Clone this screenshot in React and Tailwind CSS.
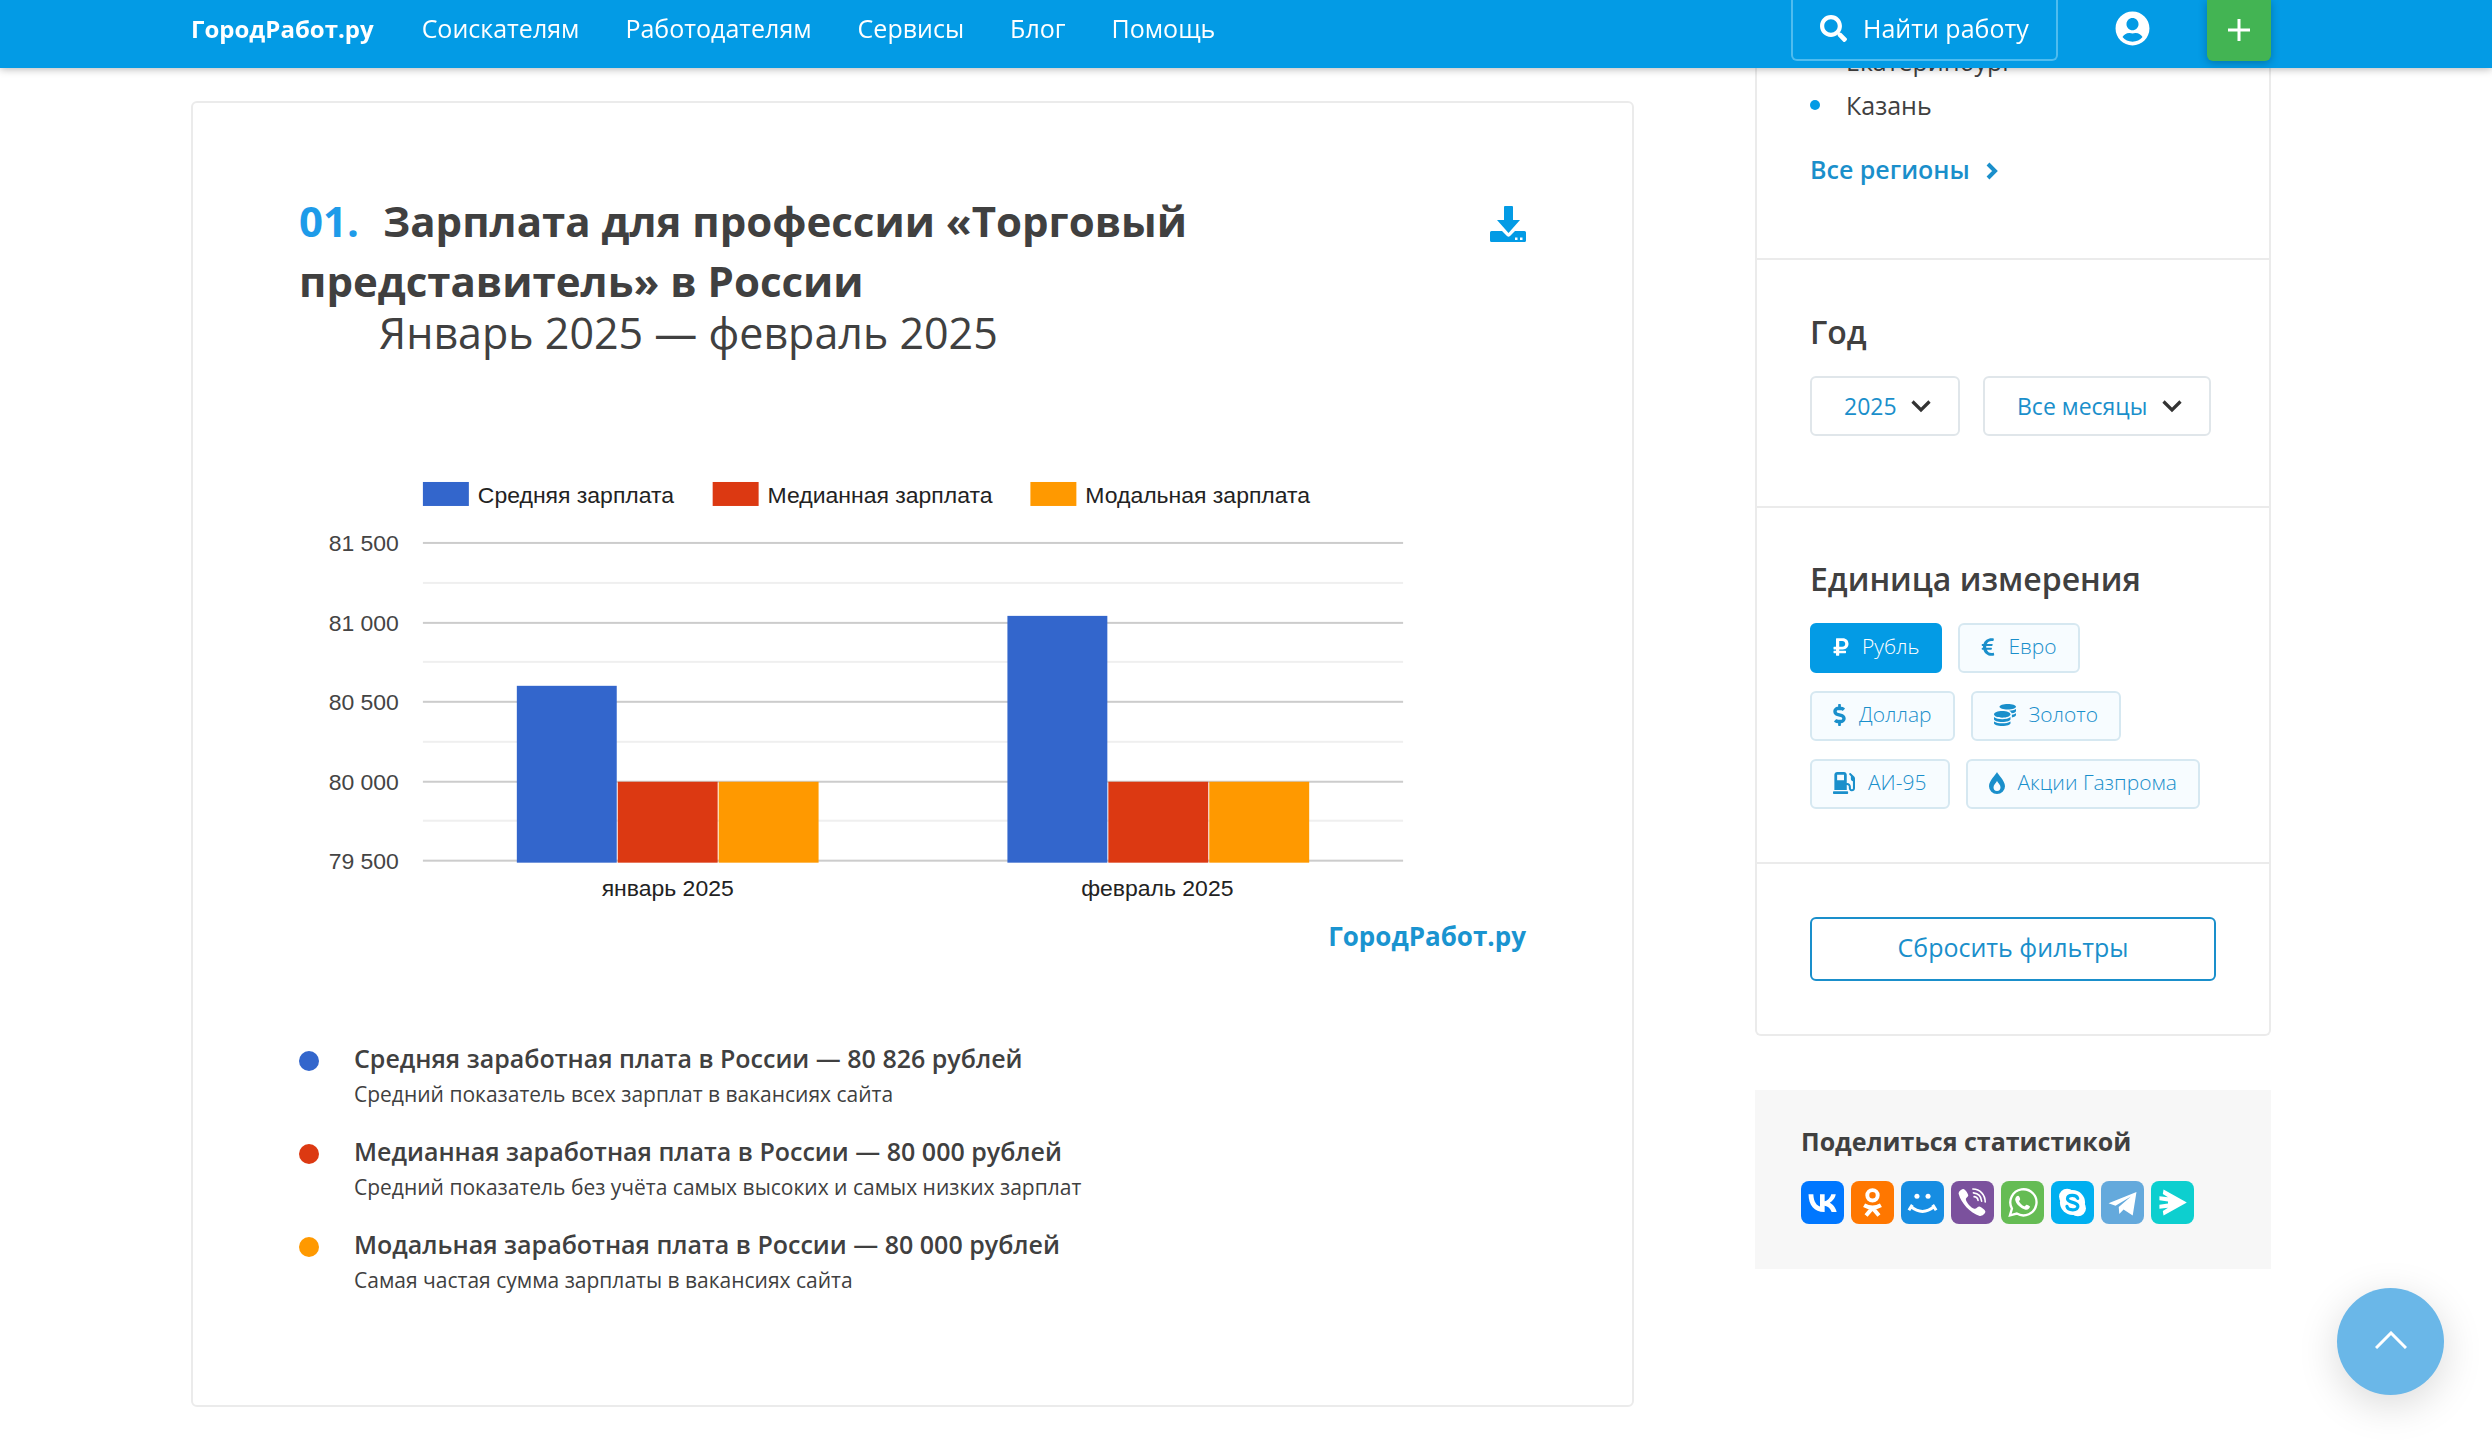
import { useState } from "react";
import { FaSearch, FaUserCircle, FaRubleSign, FaEuroSign, FaDollarSign, FaCoins, FaGasPump } from "react-icons/fa";

const NAV_LINKS = ["Соискателям", "Работодателям", "Сервисы", "Блог", "Помощь"];

const SERIES = [
    { name: "Средняя зарплата", color: "#3366cc", legendX: 124 },
    { name: "Медианная зарплата", color: "#dc3912", legendX: 414 },
    { name: "Модальная зарплата", color: "#ff9900", legendX: 732 },
];

const MONTHS = [
    { label: "январь 2025", values: [80602, 80000, 80000] },
    { label: "февраль 2025", values: [81040, 80000, 80000] },
];

const TICKS = [
    { value: 81500, label: "81 500" },
    { value: 81000, label: "81 000" },
    { value: 80500, label: "80 500" },
    { value: 80000, label: "80 000" },
    { value: 79500, label: "79 500" },
];

const SUMMARY = [
    {
        dot: "bg-[#3366cc]",
        title: "Средняя заработная плата в России — 80 826 рублей",
        note: "Средний показатель всех зарплат в вакансиях сайта",
    },
    {
        dot: "bg-[#dc3912]",
        title: "Медианная заработная плата в России — 80 000 рублей",
        note: "Средний показатель без учёта самых высоких и самых низких зарплат",
    },
    {
        dot: "bg-[#ff9900]",
        title: "Модальная заработная плата в России — 80 000 рублей",
        note: "Самая частая сумма зарплаты в вакансиях сайта",
    },
];

const DropIcon = ({ className }) => (
    <svg viewBox="0 0 16 22" className={className} fill="currentColor" aria-hidden="true">
        <path
            fillRule="evenodd"
            d="M8 0C8.6 2.2 16 8.600 16 14.200A8 7.800 0 0 1 0 14.200C0 8.600 7.400 2.200 8 0ZM8 9C7 11 4.500 12.700 4.500 15.300A3.500 3.700 0 0 0 11.500 15.300C11.500 12.700 9 11 8 9Z"
        />
    </svg>
);

const UNITS = [
    { id: "rub", label: "Рубль", icon: FaRubleSign, size: "w-4 h-5" },
    { id: "eur", label: "Евро", icon: FaEuroSign, size: "w-[14px] h-5" },
    { id: "usd", label: "Доллар", icon: FaDollarSign, size: "w-[13px] h-[22px]" },
    { id: "gold", label: "Золото", icon: FaCoins, size: "w-[22px] h-[22px]" },
    { id: "fuel", label: "АИ-95", icon: FaGasPump, size: "w-[22px] h-[22px]" },
    { id: "gazprom", label: "Акции Газпрома", icon: DropIcon, size: "w-4 h-[22px]" },
];

const SHARE = [
    {
        name: "ВКонтакте",
        bg: "bg-[#0077ff]",
        icon: <path fill="#fff" d="M12.900 17.300C7.400 17.300 4.300 13.600 4.200 7.400H6.900C7 11.900 9 13.800 10.600 14.200V7.400H13.200V11.300C14.700 11.100 16.400 9.300 16.900 7.400H19.400C19 9.700 17.300 11.400 16.100 12.100C17.300 12.700 19.200 14.200 19.900 17.300H17.100C16.500 15.400 15.100 14 13.200 13.800V17.300Z" />,
    },
    {
        name: "Одноклассники",
        bg: "bg-[#ff7700]",
        icon: (
            <g fill="none" stroke="#fff" strokeWidth="2.200">
                <circle cx="12" cy="8" r="2.900" />
                <path d="M7.300 13.500Q12 16.200 16.700 13.500M12 15L8.400 19.300M12 15L15.600 19.300" />
            </g>
        ),
    },
    {
        name: "Мой Мир",
        bg: "bg-[#168de2]",
        icon: (
            <g fill="none" stroke="#fff" strokeWidth="1.700">
                <circle cx="8.900" cy="8.500" r="1.400" fill="#fff" stroke="none" />
                <circle cx="15.100" cy="8.500" r="1.400" fill="#fff" stroke="none" />
                <path d="M5.400 14.200Q12 19.800 18.600 14.200M4.400 16.300L6.300 13.300M19.600 16.300L17.700 13.300" />
            </g>
        ),
    },
    {
        name: "Viber",
        bg: "bg-[#7b519d]",
        icon: (
            <g>
                <path fill="#fff" d="M6.700 4.500C7.700 4.200 9.300 6.700 9.600 7.800C9.800 8.900 8.200 9.300 8.300 10.300C8.500 12 11.200 15 13 15.500C14.300 15.800 14.600 14 15.800 14.200C16.900 14.400 19.300 16.200 19.200 17.200C19 18.400 17.200 19.800 16 19.500C10.600 17.800 5.600 12.300 4.300 7.300C4 6.100 5.500 4.800 6.700 4.500Z" />
                <path fill="none" stroke="#fff" strokeWidth="0.900" strokeLinecap="round" d="M12.200 4.500C16.300 4.600 19 7.600 19.100 11.700M12.500 6.600C15.300 6.900 16.900 8.600 17.100 11.300M12.900 8.700C14.300 8.900 15 9.600 15.100 10.900" />
            </g>
        ),
    },
    {
        name: "WhatsApp",
        bg: "bg-[#65bc54]",
        icon: (
            <g>
                <path fill="none" stroke="#fff" strokeWidth="1.300" d="M5 19.200L6.100 15.400A7.300 7.300 0 1 1 8.800 18.200Z" />
                <path fill="#fff" d="M9.600 8.200C10.200 8.200 10.700 9.800 10.700 10.200C10.700 10.700 9.900 11 10.100 11.500C10.800 12.800 11.700 13.600 13 14.100C13.500 14.200 13.900 13.100 14.300 13.200C14.800 13.300 16.200 14 16.200 14.300C16 15.600 14.900 16.200 13.700 16C10.900 15.400 8.300 12.800 7.900 10.500C7.800 9.400 8.700 8.200 9.600 8.200Z" />
            </g>
        ),
    },
    {
        name: "Skype",
        bg: "bg-[#00aff0]",
        icon: (
            <g>
                <circle cx="9" cy="8.800" r="4.500" fill="#fff" />
                <circle cx="15" cy="15.200" r="4.500" fill="#fff" />
                <circle cx="12" cy="12" r="7" fill="#fff" />
                <path fill="none" stroke="#00aff0" strokeWidth="1.800" strokeLinecap="round" d="M14.900 9.700C14.200 7.500 9.300 7.400 9.200 9.900C9.200 12.400 15 11.400 15 14.100C14.900 16.800 9.500 16.700 8.900 14.200" />
            </g>
        ),
    },
    {
        name: "Telegram",
        bg: "bg-[#64a9dc]",
        icon: <path fill="#fff" d="M4.200 12.400L19.800 6.200L17.700 19.200L12.600 15.900L10.200 18.400L9.900 14.500L16.700 8.700L8.100 13.800Z" />,
    },
    {
        name: "Поделиться",
        bg: "bg-[#0dcfcf]",
        icon: <path fill="#fff" d="M20 12L7 19.200L6.600 16.800L9.500 14.900L4.700 15.500V13.300L9.500 12.600V11.400L4.700 10.700V8.500L9.500 9.100L6.600 7.200L7 4.800Z" />,
    },
];

const Header = () => (
    <header className="fixed inset-x-0 top-0 z-20 h-[68px] bg-[#039be5] pr-[30px] shadow-[0_1px_8px_rgba(0,0,0,0.3)]">
        <div className="mx-auto flex h-[61px] max-w-[2080px] items-stretch text-[25px] leading-[57px] text-white">
            <a href="#home" className="mr-12 text-[24px] font-bold">ГородРабот.ру</a>
            <nav className="flex gap-[46px]">
                {NAV_LINKS.map((link) => (
                    <a key={link} href="#nav">{link}</a>
                ))}
            </nav>
            <a
                href="#search"
                className="ml-auto mr-[57px] flex w-[267px] items-center gap-4 rounded-b-md border-x-2 border-b-2 border-[#4fbcef] pb-0.5 pl-[27px]"
            >
                <FaSearch className="size-[27px]" />
                <span>Найти работу</span>
            </a>
            <button aria-label="Профиль" className="mr-[57px]">
                <FaUserCircle className="mb-1 size-[35px]" />
            </button>
            <button
                aria-label="Добавить"
                className="flex w-16 items-center justify-center rounded-b-md bg-[#43b453] pb-0.5 shadow-[0_2px_8px_rgba(0,0,0,0.25)]"
            >
                <svg viewBox="0 0 22 22" className="size-[22px]" stroke="currentColor" strokeWidth="3">
                    <path d="M11 0V22M0 11H22" />
                </svg>
            </button>
        </div>
    </header>
);

const SalaryChart = () => {
    const y = (value) => 81 + ((81500 - value) / 2000) * 318;

    return (
        <svg viewBox="0 0 1228 440" className="w-full" fontFamily="'Liberation Sans', Arial, sans-serif" fontSize="23">
            {SERIES.map((s) => (
                <g key={s.name}>
                    <rect x={s.legendX} y="20" width="46" height="24" fill={s.color} />
                    <text x={s.legendX + 55} y="41" fill="#222">{s.name}</text>
                </g>
            ))}

            {TICKS.map((tick, i) => (
                <g key={tick.value}>
                    <rect x="124" y={Math.round(y(tick.value)) - 1} width="981" height="2" fill="#ccc" />
                    {i < TICKS.length - 1 && (
                        <rect x="124" y={Math.round(y(tick.value - 250)) - 1} width="981" height="2" fill="#efefef" />
                    )}
                    <text x="100" y={Math.round(y(tick.value)) + 8} textAnchor="end" fill="#444">{tick.label}</text>
                </g>
            ))}

            {MONTHS.map((month, m) => (
                <g key={month.label}>
                    {month.values.map((value, i) => (
                        <rect
                            key={SERIES[i].name}
                            x={218 + m * 491 + i * 101}
                            y={Math.round(y(value))}
                            width="100"
                            height={401 - Math.round(y(value))}
                            fill={SERIES[i].color}
                        />
                    ))}
                    <text x={369 + m * 490} y="434" textAnchor="middle" fill="#222">{month.label}</text>
                </g>
            ))}
        </svg>
    );
};

const Report = () => (
    <main className="min-w-0 flex-1 rounded-md border-2 border-[#ebebeb] px-[106px] pb-[109px] pt-[88px]">
        <div className="flex items-start justify-between">
            <div className="max-w-[1000px]">
                <h1 className="text-[42px] font-bold leading-[60px]">
                    <span className="mr-6 text-[#1e9be9]">01.</span>
                    Зарплата для профессии «Торговый представитель» в России
                </h1>
                <p className="pl-20 text-[43px] leading-[44px]">Январь 2025 — февраль 2025</p>
            </div>
            <button aria-label="Скачать" className="mt-[15px] text-[#039be5]">
                <svg viewBox="0 0 36 36" className="size-9" fill="currentColor">
                    <path d="M15 0H22Q23 0 23 1V14H30L18.500 27L7 14H14V1Q14 0 15 0Z" />
                    <path fillRule="evenodd" d="M1.500 25H12L17 30Q18.500 31.500 20 30L25 25H34.500Q36 25 36 26.500V34.500Q36 36 34.500 36H1.500Q0 36 0 34.500V26.500Q0 25 1.500 25ZM25 31.500V34H27.500V31.500ZM30 31.500V34H32.500V31.500Z" />
                </svg>
            </button>
        </div>

        <div className="mt-[107px]">
            <SalaryChart />
        </div>
        <div className="mt-[14px] text-right text-[26px] font-bold leading-10 text-[#1a94d0]">ГородРабот.ру</div>

        <ul className="mt-[83px] space-y-[22px]">
            {SUMMARY.map((item) => (
                <li key={item.title} className="flex">
                    <span className={`mr-[35px] mt-3 size-5 shrink-0 rounded-full ${item.dot}`} />
                    <div>
                        <p className="text-[25px] font-semibold leading-[38px]">{item.title}</p>
                        <p className="pt-px text-[21px] leading-8">{item.note}</p>
                    </div>
                </li>
            ))}
        </ul>
    </main>
);

const Dropdown = ({ label, value, options, onChange, width }) => (
    <div className={`relative ${width}`}>
        <select
            aria-label={label}
            value={value}
            onChange={(e) => onChange(e.target.value)}
            className="h-[60px] w-full appearance-none rounded-md border-2 border-[#e0e6ea] bg-white pl-8 text-[23px] text-[#1a8fcb]"
        >
            {options.map((option) => (
                <option key={option}>{option}</option>
            ))}
        </select>
        <svg
            viewBox="0 0 20 13"
            className="pointer-events-none absolute right-[29px] top-6 h-[13px] w-5"
            fill="none"
            stroke="#333"
            strokeWidth="3.200"
        >
            <path d="M1.500 1.500L10 10L18.500 1.500" />
        </svg>
    </div>
);

const Filters = () => {
    const [year, setYear] = useState("2025");
    const [month, setMonth] = useState("Все месяцы");
    const [unit, setUnit] = useState("rub");

    const reset = () => {
        setYear("2025");
        setMonth("Все месяцы");
        setUnit("rub");
    };

    return (
        <div className="divide-y-2 divide-[#ebebeb] rounded-b-md border-2 border-t-0 border-[#ebebeb]">
            <section className="px-[53px] pb-[67px] pt-[39px]">
                <ul className="text-[25px] leading-[44px]">
                    {["Екатеринбург", "Казань"].map((city) => (
                        <li key={city} className="flex items-center">
                            <span className="mr-[26px] size-[10px] rounded-full bg-[#039be5]" />
                            {city}
                        </li>
                    ))}
                </ul>
                <a href="#regions" className="mt-5 flex items-center gap-4 text-[25px] font-semibold leading-[44px] text-[#1a8fcb]">
                    Все регионы
                    <svg viewBox="0 0 12 18" className="mt-1 h-[18px] w-3" fill="none" stroke="currentColor" strokeWidth="4">
                        <path d="M2 2L9 9L2 16" />
                    </svg>
                </a>
            </section>

            <section className="px-[53px] pb-[70px] pt-[49px]">
                <h2 className="mb-[21px] text-[32px] font-semibold leading-[46px]">Год</h2>
                <div className="flex gap-[23px]">
                    <Dropdown label="Год" value={year} options={["2025", "2024", "2023"]} onChange={setYear} width="w-[150px]" />
                    <Dropdown
                        label="Месяц"
                        value={month}
                        options={["Все месяцы", "Январь", "Февраль"]}
                        onChange={setMonth}
                        width="w-[228px]"
                    />
                </div>
            </section>

            <section className="px-[53px] pb-[53px] pt-12">
                <h2 className="mb-[21px] text-[32px] font-semibold leading-[46px]">Единица измерения</h2>
                <div className="flex flex-wrap gap-x-4 gap-y-[18px]">
                    {UNITS.map(({ id, label, icon: Icon, size }) => (
                        <button
                            key={id}
                            onClick={() => setUnit(id)}
                            className={`flex h-[50px] items-center gap-[13px] rounded-md border-2 px-[21px] pb-0.5 text-[21px] font-light ${
                                unit === id
                                    ? "border-[#039be5] bg-[#039be5] text-white"
                                    : "border-[#d6e8f1] bg-[#f7fcff] text-[#1a8fcb]"
                            }`}
                        >
                            <Icon className={size} />
                            {label}
                        </button>
                    ))}
                </div>
            </section>

            <section className="p-[53px]">
                <button
                    onClick={reset}
                    className="h-16 w-full rounded-md border-2 border-[#1a8fcb] pb-0.5 text-[25px] text-[#1a8fcb]"
                >
                    Сбросить фильтры
                </button>
            </section>
        </div>
    );
};

const Share = () => (
    <div className="mt-[54px] bg-[#f7f7f7] px-[46px] pb-[45px] pt-8">
        <h3 className="text-[25px] font-bold leading-[38px]">Поделиться статистикой</h3>
        <div className="mt-[21px] flex gap-[7px]">
            {SHARE.map((item) => (
                <a key={item.name} href="#share" aria-label={item.name} className={`rounded-lg ${item.bg}`}>
                    <svg viewBox="0 0 24 24" className="size-[43px]">{item.icon}</svg>
                </a>
            ))}
        </div>
    </div>
);

export default function App() {
    return (
        <div className="min-h-screen bg-white pr-[30px] font-['Open_Sans','Noto_Sans',sans-serif] text-[#404040]">
            <Header />
            <div className="mx-auto flex max-w-[2080px] items-start gap-[121px] pb-9">
                <div className="flex min-w-0 flex-1 pt-[101px]">
                    <Report />
                </div>
                <aside className="w-[516px] shrink-0">
                    <Filters />
                    <Share />
                </aside>
            </div>
            <button
                aria-label="Наверх"
                className="fixed bottom-[46px] right-12 z-10 flex size-[107px] items-center justify-center rounded-full bg-[#6ab7e8] shadow-[0_10px_40px_rgba(0,0,0,0.15)]"
            >
                <svg viewBox="0 0 32 18" className="mb-1 h-[18px] w-8" fill="none" stroke="#fff" strokeWidth="3">
                    <path d="M1 17L16 2L31 17" />
                </svg>
            </button>
        </div>
    );
}
